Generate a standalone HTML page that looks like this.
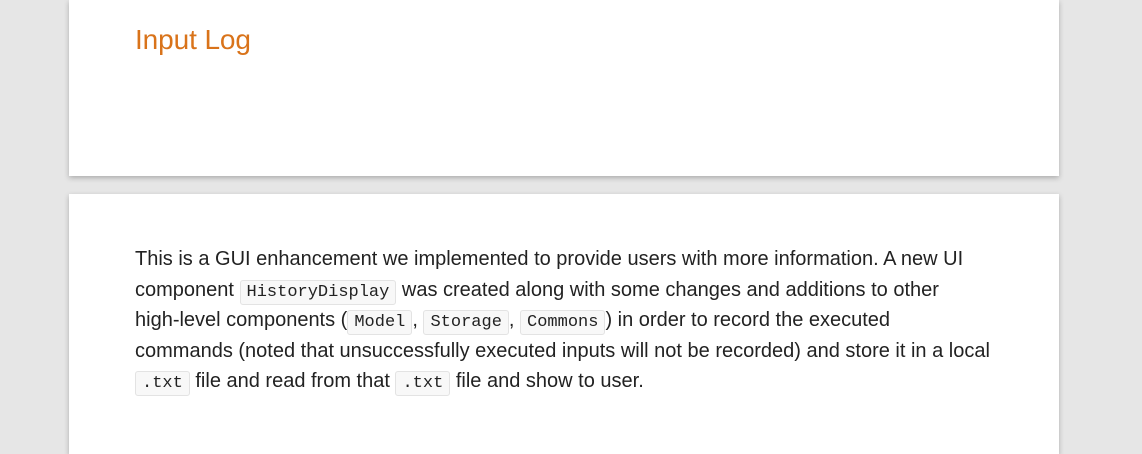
<!DOCTYPE html>
<html><head><meta charset="utf-8"><style>
html,body{margin:0;padding:0}
body{width:1142px;height:428px;background:#e6e6e6;position:relative;overflow:hidden;font-family:"Liberation Sans",sans-serif}
.card{position:absolute;left:69px;width:990px;background:#fff;box-shadow:0 2px 5px rgba(0,0,0,.25)}
h1{position:absolute;left:66px;top:24px;margin:0;font-weight:normal;font-size:28px;color:#d9731a;letter-spacing:-0.1px}
.p{position:absolute;left:66px;top:50px;font-size:20px;color:#222;line-height:30.5px;white-space:nowrap;letter-spacing:0}
code{font-family:"Liberation Mono",monospace;font-size:17px;line-height:1;background:#f8f8f8;border:1px solid #e3e3e3;border-radius:3px;padding:2px 6px;letter-spacing:0}
</style></head><body>
<div class="card" style="top:0;height:176px"><h1>Input Log</h1></div>
<div class="card" style="top:194px;height:260px"><div class="p">
This is a GUI enhancement we implemented to provide users with more information. A new UI<br>
component <code>HistoryDisplay</code> was created along with some changes and additions to other<br>
high-level components (<code>Model</code>, <code>Storage</code>, <code>Commons</code>) in order to record the executed<br>
commands (noted that unsuccessfully executed inputs will not be recorded) and store it in a local<br>
<code>.txt</code> file and read from that <code>.txt</code> file and show to user.
</div></div>
</body></html>
